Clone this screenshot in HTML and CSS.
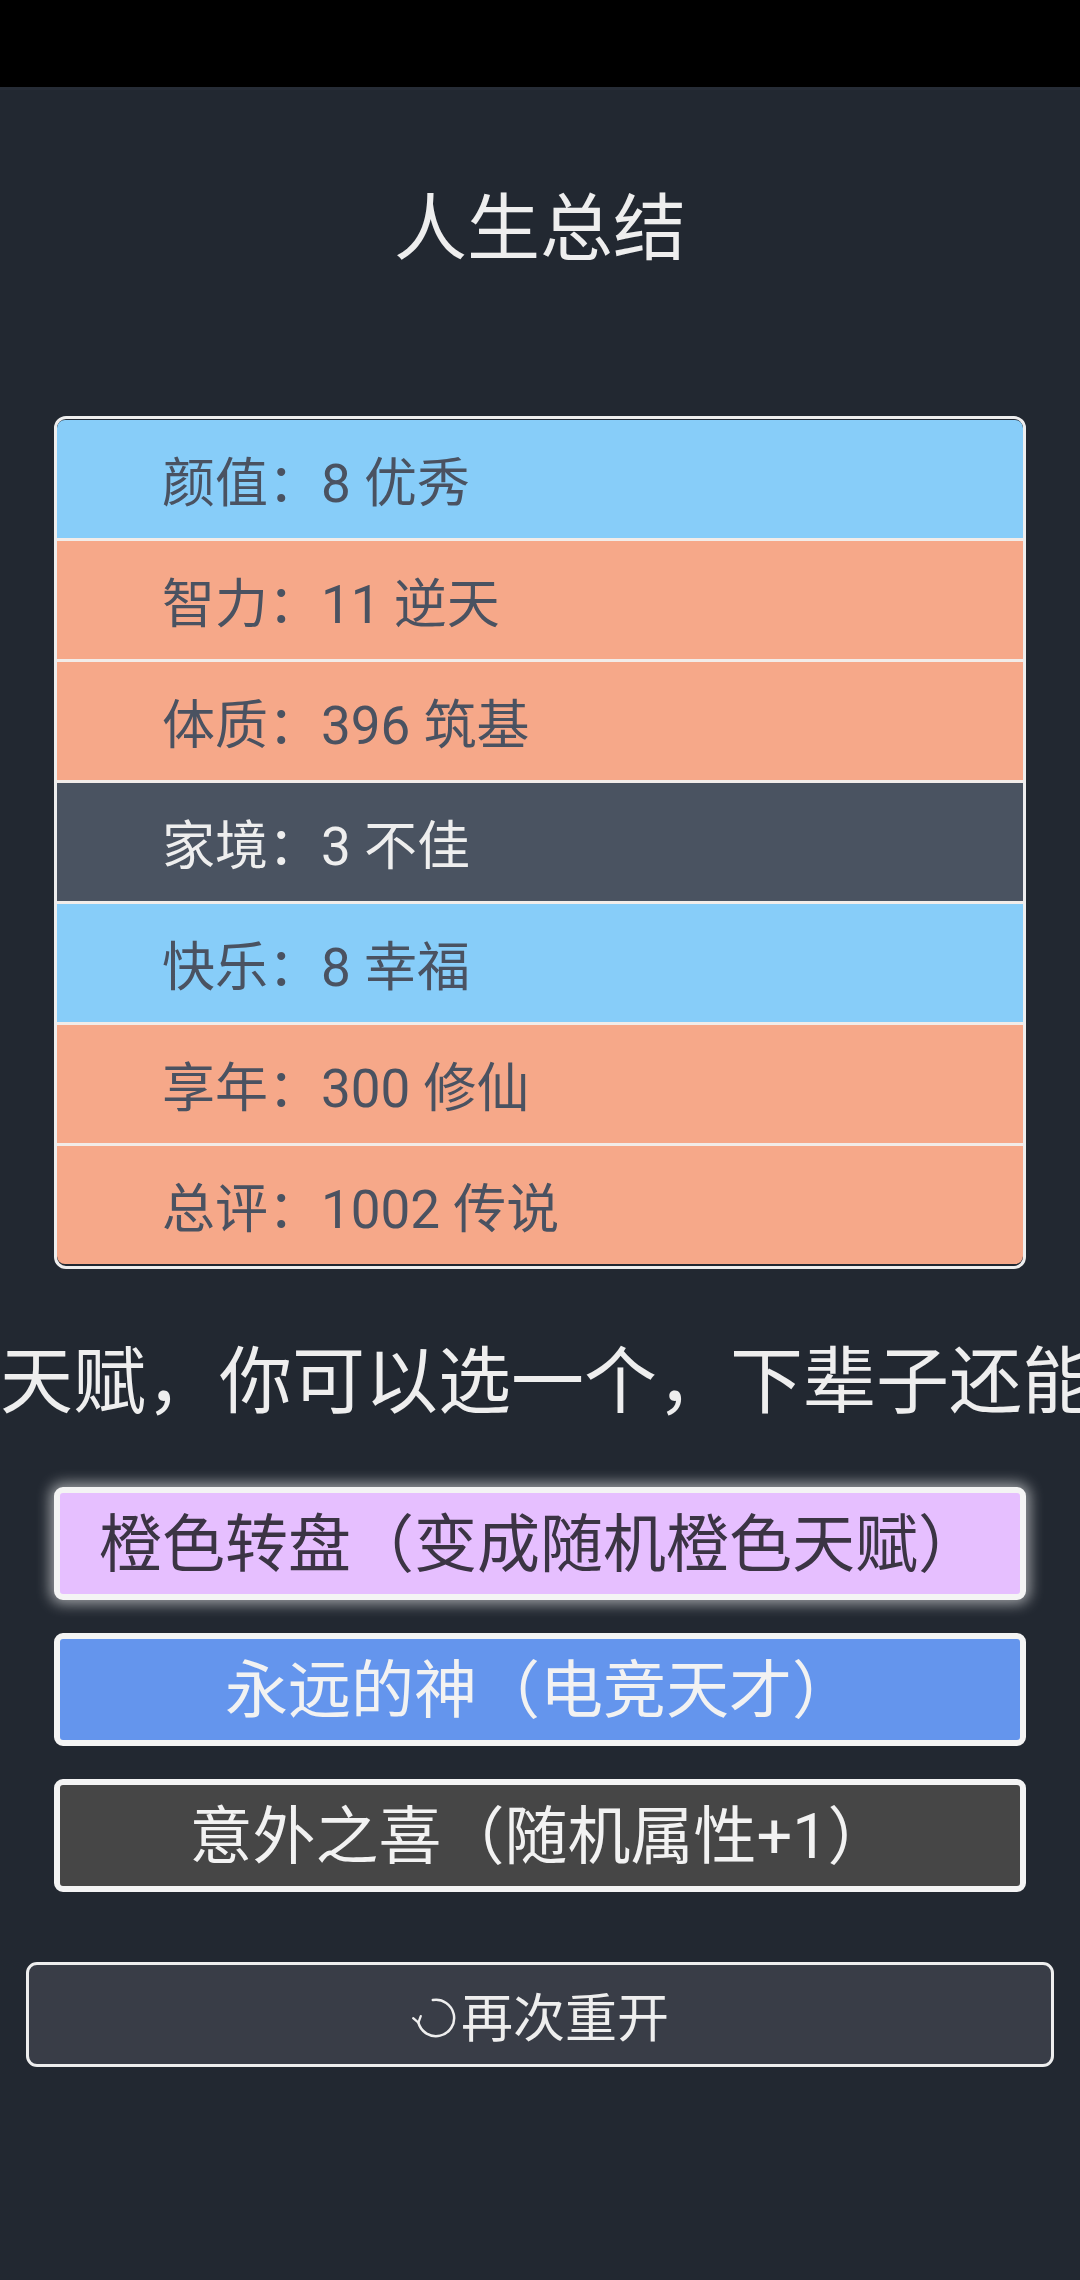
FILE: index.html
```html
<!DOCTYPE html>
<html lang="zh-CN">
<head>
<meta charset="utf-8">
<title>人生总结</title>
<link rel="stylesheet" href="styles.css">
</head>
<body>
<div class="statusbar"></div>
<main class="page">
  <h1 class="title">人生总结</h1>
  <ul class="summary">
    <li class="row grade-blue">颜值：8 优秀</li>
    <li class="row grade-orange">智力：11 逆天</li>
    <li class="row grade-orange">体质：396 筑基</li>
    <li class="row grade-grey">家境：3 不佳</li>
    <li class="row grade-blue">快乐：8 幸福</li>
    <li class="row grade-orange">享年：300 修仙</li>
    <li class="row grade-orange">总评：1002 传说</li>
  </ul>
  <div class="hint">天赋，你可以选一个，下辈子还能抽到</div>
  <ul class="talents">
    <li class="talent talent-purple selected">橙色转盘（变成随机橙色天赋）</li>
    <li class="talent talent-blue">永远的神（电竞天才）</li>
    <li class="talent talent-grey">意外之喜（随机属性+1）</li>
  </ul>
  <button class="restart">
    <svg class="restart-icon" viewBox="-2 -2 44 44" aria-hidden="true">
      <path d="M17.2 4.2 A16 16 0 1 1 4.5 24.1" fill="none" stroke="#eeeeee" stroke-width="2.2" stroke-linecap="round"/>
      <path d="M6.6 18.4 L4.5 24.1 L-0.1 20.2" fill="none" stroke="#eeeeee" stroke-width="2" stroke-linecap="round" stroke-linejoin="round"/>
    </svg><span>再次重开</span>
  </button>
</main>
</body>
</html>
```

FILE: styles.css
```css
html, body {
  margin: 0;
  padding: 0;
}

body {
  background: #222831;
  font-family: Roboto, "Noto Sans CJK SC", sans-serif;
  color: #eeeeee;
  width: 1080px;
  min-height: 2280px;
}

.statusbar {
  height: 90px;
  background: #000000;
  border-bottom: 3px solid #262c36;
  box-sizing: border-box;
}

.page {
  display: flex;
  flex-direction: column;
  align-items: stretch;
}

.title {
  margin: 85px 0 0;
  font-size: 73px;
  font-weight: 400;
  line-height: 108px;
  text-align: center;
  color: #eeeeee;
}

.summary {
  list-style: none;
  margin: 133px 54px 0;
  padding: 1px 0 2px;
  border: 3px solid #eeeeee;
  border-radius: 12px;
  overflow: hidden;
  background: #222831;
  display: flex;
  flex-direction: column;
  gap: 3px;
}

.summary .row:not(:first-child) {
  box-shadow: 0 -3px 0 #f2ece9;
}

.row {
  height: 118px;
  display: flex;
  align-items: center;
  padding-left: 105px;
  font-size: 53px;
  color: #4a5261;
}

.row:first-child {
  border-radius: 8px 8px 0 0;
}

.row:last-child {
  border-radius: 0 0 8px 8px;
}

.grade-blue {
  background: #87cdf9;
}

.grade-orange {
  background: #f6a889;
}

.grade-grey {
  background: #4a5361;
  color: #eeeeee;
}

.hint {
  margin-top: 58px;
  font-size: 73px;
  line-height: 110px;
  white-space: nowrap;
  overflow: hidden;
  color: #eeeeee;
}

.talents {
  list-style: none;
  margin: 50px 54px 0;
  padding: 0;
  display: flex;
  flex-direction: column;
  gap: 33px;
}

.talent {
  height: 113px;
  box-sizing: border-box;
  border: 6px solid #f4f4f4;
  border-radius: 9px;
  padding-bottom: 10px;
  display: flex;
  align-items: center;
  justify-content: center;
  font-size: 63px;
  white-space: nowrap;
}

.talent-purple {
  background: #e6bfff;
  color: #3b3444;
}

.talent-blue {
  background: #6495ed;
  color: #f2f2f2;
}

.talent-grey {
  background: #464646;
  color: #f2f2f2;
}

.selected {
  box-shadow: 0 0 14px 4px rgba(255, 255, 255, 0.55);
}

.restart {
  margin: 70px 26px 0;
  height: 105px;
  box-sizing: border-box;
  border: 3px solid #eeeeee;
  border-radius: 11px;
  background: #393d47;
  color: #eeeeee;
  font-family: Roboto, "Noto Sans CJK SC", sans-serif;
  font-size: 52px;
  display: flex;
  align-items: center;
  justify-content: center;
  padding: 0;
}

.restart-icon {
  width: 50px;
  height: 50px;
  margin-top: 6px;
  margin-right: 0;
}
```
